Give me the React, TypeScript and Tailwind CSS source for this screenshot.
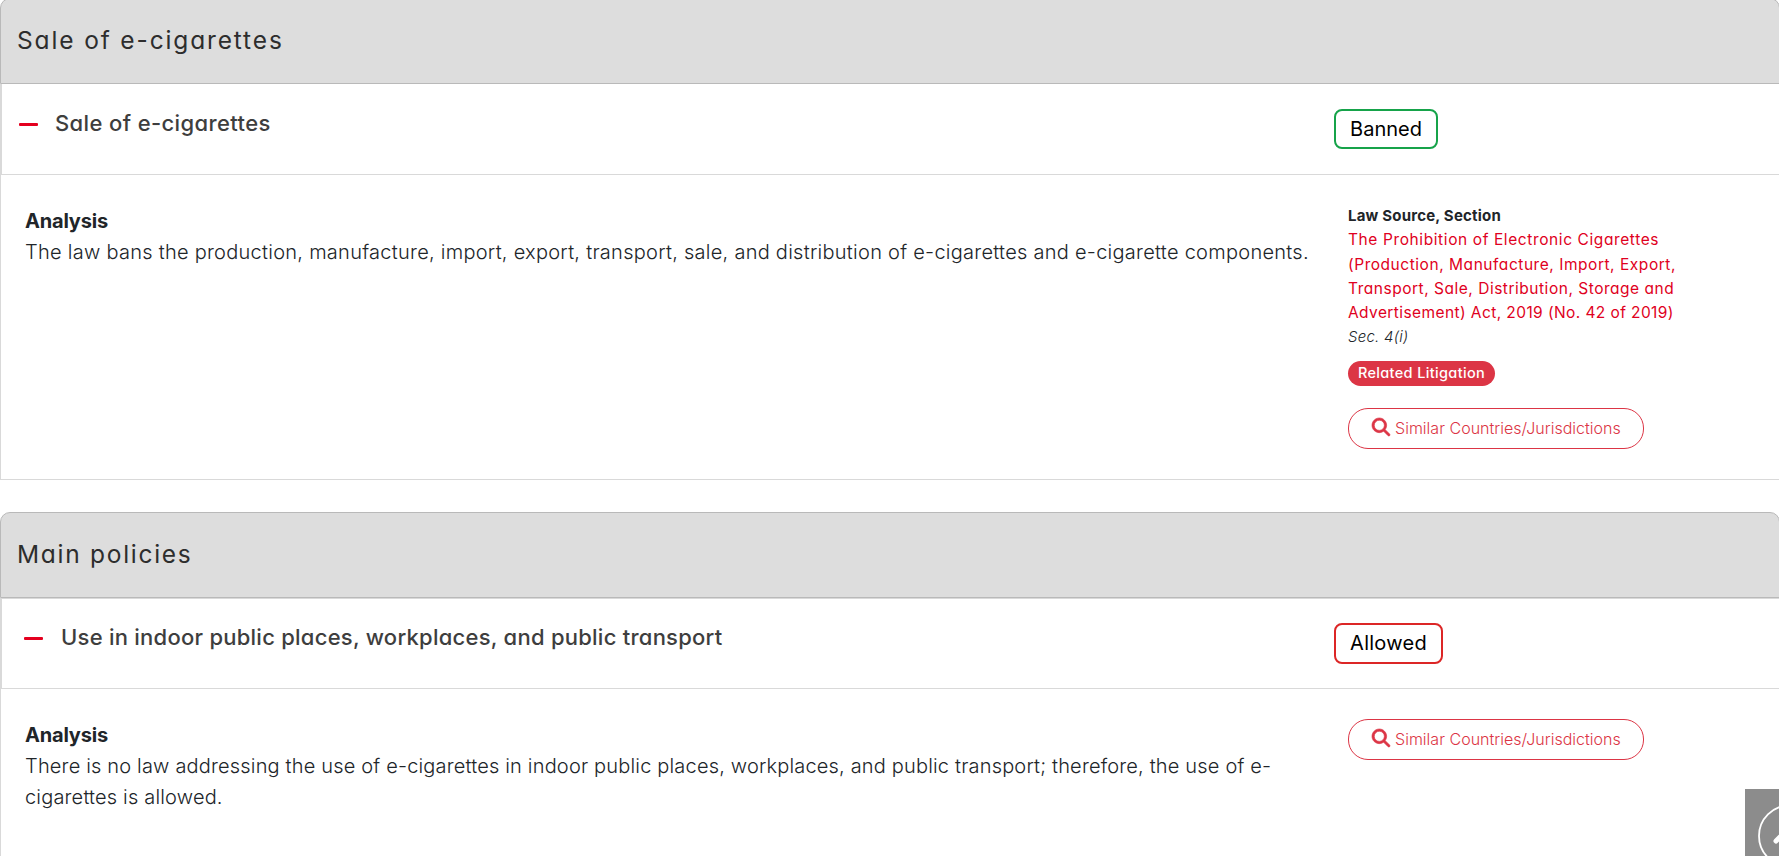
import { FaMagnifyingGlass } from "react-icons/fa6";

const Header = ({ title, className }: { title: string; className: string }) => (
  <div className="-mr-px flex h-[86px] items-center rounded-t-[10px] border border-[#b9b9b9] bg-[#dddddd] pb-[2px] pl-4">
    <h2 className={"text-[24.5px] leading-8 font-[370] text-[#2d2d2d] [font-feature-settings:'cv11'] " + className}>
      {title}
    </h2>
  </div>
);

const SimilarButton = ({ className = "" }: { className?: string }) => (
  <button
    className={
      "flex h-[41px] w-[296px] items-center rounded-[20px] border border-[#dc3545] pl-[23px] text-[16px] font-[340] text-[#dc3545] " +
      className
    }
  >
    <FaMagnifyingGlass className="mr-[5px] mb-[3px] size-[18px] overflow-visible stroke-current [stroke-width:18]" />
    <span className="mb-px tracking-[0.02px] whitespace-nowrap">Similar Countries/Jurisdictions</span>
  </button>
);

const Minus = () => <span className="mt-[15px] block h-[3px] w-[19px] rounded-[1px] bg-[#e4001f]"></span>;

const App = () => {
  return (
    <div className="relative flex h-[856px] flex-col overflow-hidden bg-white font-['Inter',sans-serif] text-[#212529]">
      {/* Sale of e-cigarettes */}
      <section className="-mt-[2px]">
        <Header title="Sale of e-cigarettes" className="tracking-[1.86px]" />
        <div className="border-l border-[#d9d9d9]">
          <div className="flex h-[91px] border-b border-l border-[#d9d9d9]">
            <div className="flex w-[1332px] gap-[17px] pt-6 pl-[17px]">
              <Minus />
              <h3 className="text-[22px] leading-[30px] font-medium tracking-[0.38px] text-[#3e3e3e] [font-feature-settings:'cv11']">
                Sale of e-cigarettes
              </h3>
            </div>
            <span className="mt-[25px] h-10 w-[104px] rounded-lg border-2 border-[#16a34a] text-center text-[20px] leading-[37px] font-[380] text-black">
              Banned
            </span>
          </div>

          <div className="flex h-[305px] border-b border-[#d9d9d9]">
            <div className="w-[1347px] pt-[31px] pl-[24px]">
              <h4 className="text-[20px] leading-[31px] font-bold tracking-[-0.2px]">Analysis</h4>
              <p className="text-[20px] leading-[31px] font-light tracking-[0.265px] whitespace-nowrap">
                The law bans the production, manufacture, import, export, transport, sale, and distribution of
                e-cigarettes and e-cigarette components.
              </p>
            </div>
            <div className="pt-[28.5px] text-[15px] leading-[24.3px]">
              <h5 className="font-bold tracking-[0.2px]">Law Source, Section</h5>
              <a className="block pt-[0.5px] text-[15.5px] text-[#e00021] [font-feature-settings:'cv11']">
                <span className="block tracking-[0.6px]">The Prohibition of Electronic Cigarettes</span>
                <span className="block tracking-[0.54px]">(Production, Manufacture, Import, Export,</span>
                <span className="block tracking-[0.52px]">Transport, Sale, Distribution, Storage and</span>
                <span className="block tracking-[0.41px]">Advertisement) Act, 2019 (No. 42 of 2019)</span>
              </a>
              <p className="font-[350] tracking-[0.25px] italic">Sec. 4(i)</p>
              <span className="mt-[11.5px] block h-[25px] w-[147px] rounded-full bg-[#dc3545] text-center text-[14.5px] leading-[23px] font-medium tracking-[0.35px] text-white [font-feature-settings:'cv11']">
                Related Litigation
              </span>
              <SimilarButton className="mt-[22px]" />
            </div>
          </div>
        </div>
      </section>

      {/* Main policies */}
      <section className="mt-8 flex flex-1 flex-col">
        <Header title="Main policies" className="tracking-[1.72px]" />
        <div className="flex-1 border-l border-[#d9d9d9]">
          <div className="flex h-[91px] border-y border-l border-[#d9d9d9]">
            <div className="flex w-[1332px] gap-[18px] pt-[23px] pl-[22px]">
              <Minus />
              <h3 className="text-[22px] leading-[30px] font-medium tracking-[0.25px] text-[#3e3e3e] [font-feature-settings:'cv11']">
                Use in indoor public places, workplaces, and public transport
              </h3>
            </div>
            <span className="mt-6 h-[41px] w-[109px] rounded-lg border-2 border-[#dc2626] text-center text-[20px] leading-[37px] font-[380] tracking-[0.25px] text-black">
              Allowed
            </span>
          </div>

          <div className="flex">
            <div className="w-[1347px] pt-[31px] pl-[24px]">
              <h4 className="text-[20px] leading-[31px] font-bold tracking-[-0.2px]">Analysis</h4>
              <p className="text-[20px] leading-[31px] font-light tracking-[0.175px]">
                There is no law addressing the use of e-cigarettes in indoor public places, workplaces, and public
                transport; therefore, the use of e-
                <br />
                cigarettes is allowed.
              </p>
            </div>
            <div className="pt-[30px]">
              <SimilarButton />
            </div>
          </div>
        </div>
      </section>

      {/* Back to top */}
      <div className="absolute right-0 bottom-0 h-[67px] w-[34px] overflow-hidden bg-[#8c8c8c]">
        <svg className="absolute top-0 left-0" width="90" height="90" viewBox="0 0 90 90" fill="none" stroke="#fff">
          <circle cx="44.5" cy="47" r="30.5" strokeWidth="1.8" />
          <path d="M31 52 L44.5 38.5 L58 52" strokeWidth="5" strokeLinecap="round" strokeLinejoin="round" />
        </svg>
      </div>
    </div>
  );
};

export default App;
